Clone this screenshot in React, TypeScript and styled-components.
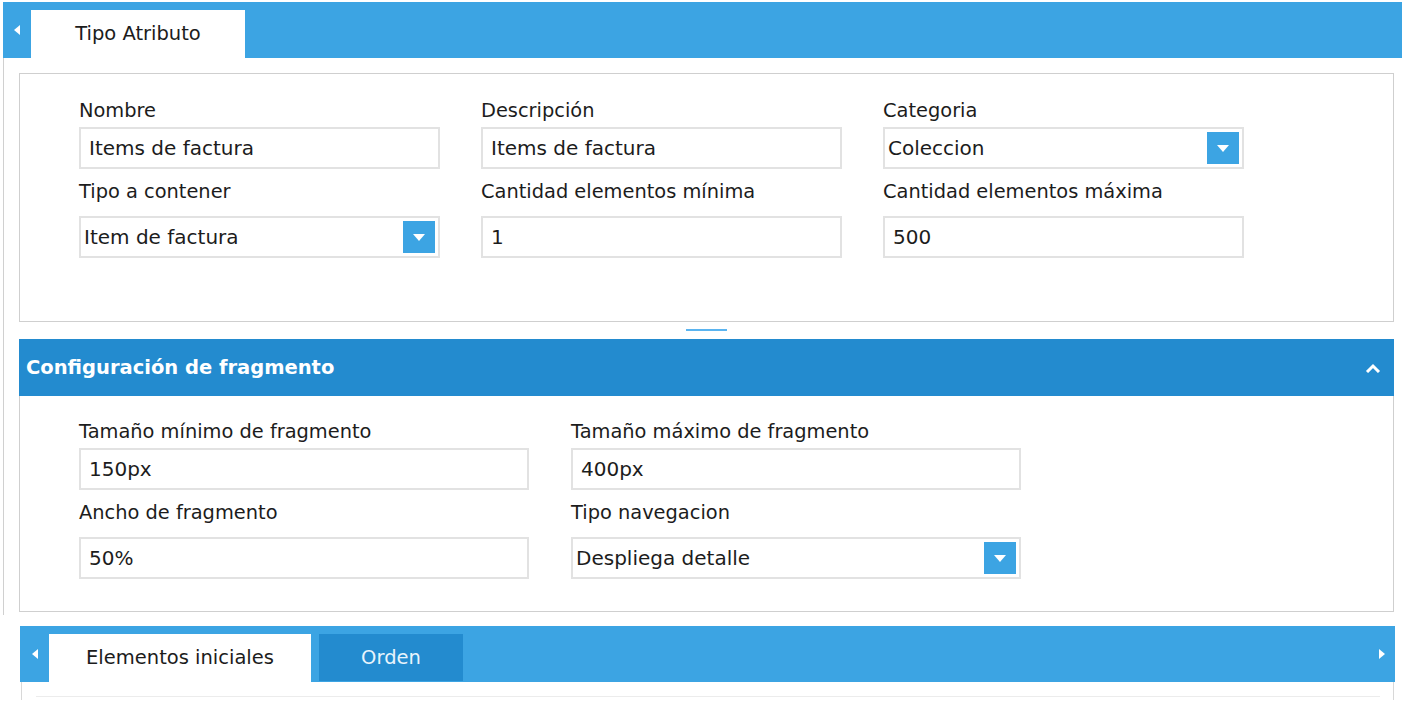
import React from 'react'
import styled, { createGlobalStyle } from 'styled-components'

const GlobalStyle = createGlobalStyle`
  html, body {
    margin: 0;
    padding: 0;
    background: #ffffff;
  }
  body {
    font-family: "DejaVu Sans", Verdana, sans-serif;
    font-size: 20px;
    color: #1c1c1c;
    overflow: hidden;
  }
`

const BLUE = '#3ca4e3'
const DARK_BLUE = '#238bcf'

const Page = styled.div`
  width: 1402px;
  height: 701px;
  padding-top: 2px;
  box-sizing: border-box;
`

const TabBar = styled.div<{ $inset?: boolean }>`
  display: flex;
  align-items: flex-end;
  height: 56px;
  background: ${BLUE};
  margin-left: ${p => (p.$inset ? '20px' : '3px')};
  margin-right: ${p => (p.$inset ? '7px' : '0')};
`

const ArrowCell = styled.div<{ $w: number }>`
  width: ${p => p.$w}px;
  height: 100%;
  display: flex;
  align-items: center;
  justify-content: center;
  flex-shrink: 0;
`

const Tab = styled.div<{ $active?: boolean; $w: number }>`
  width: ${p => p.$w}px;
  height: ${p => (p.$active ? 48 : 47)}px;
  margin-bottom: ${p => (p.$active ? 0 : 1)}px;
  margin-right: 8px;
  display: flex;
  align-items: center;
  justify-content: center;
  background: ${p => (p.$active ? '#ffffff' : DARK_BLUE)};
  color: ${p => (p.$active ? '#1c1c1c' : '#e8f4fc')};
  font-size: 19.5px;
  padding-bottom: 1px;
  box-sizing: border-box;
`

const Spacer = styled.div`
  flex: 1;
`

const Frame = styled.div`
  border-left: 1px solid #d0d0d0;
  margin-left: 3px;
  padding: 15px 8px 3px 15px;
`

const Panel = styled.div<{ $pt: number; $pb: number; $top?: boolean }>`
  border: 1px solid #cfcfcf;
  border-top: ${p => (p.$top ? '1px solid #cfcfcf' : 'none')};
  padding: ${p => p.$pt}px 0 ${p => p.$pb}px 59px;
`

const FieldGrid = styled.div<{ $col: number; $cols: number; $gap: number }>`
  display: grid;
  grid-template-columns: repeat(${p => p.$cols}, ${p => p.$col}px);
  column-gap: ${p => p.$gap}px;
  row-gap: 12px;
`

const Field = styled.div`
  display: flex;
  flex-direction: column;
`

const Label = styled.div<{ $lower?: boolean }>`
  height: 22px;
  line-height: 22px;
  font-size: 19.4px;
  margin-bottom: ${p => (p.$lower ? 13 : 5)}px;
  white-space: nowrap;
`

const InputBox = styled.div`
  position: relative;
  height: 42px;
  border: 2px solid #e2e2e2;
  box-sizing: border-box;
  display: flex;
  align-items: center;
  padding-left: 8px;
`

const SelectBox = styled(InputBox)`
  padding-left: 3px;
`

const DropButton = styled.div`
  position: absolute;
  right: 3px;
  top: 3px;
  width: 32px;
  height: 32px;
  background: ${BLUE};
  display: flex;
  align-items: center;
  justify-content: center;
`

const Divider = styled.div`
  display: flex;
  justify-content: center;
  padding: 7px 0 8px;
`

const Grip = styled.div`
  width: 41px;
  height: 2px;
  background: #5ab4f0;
`

const SectionHeader = styled.div`
  height: 57px;
  background: ${DARK_BLUE};
  color: #ffffff;
  font-weight: bold;
  font-size: 19.5px;
  display: flex;
  align-items: center;
  justify-content: space-between;
  padding: 0 13px 0 7px;
`

const BottomArea = styled.div`
  margin-top: 11px;
`

const TabContent = styled.div`
  margin-left: 21px;
  width: 1373px;
  height: 18px;
  border-left: 1px solid #d8d8d8;
  border-right: 1px solid #d8d8d8;
  box-sizing: border-box;
  padding: 14px 13px 0 14px;
`

const ContentLine = styled.div`
  height: 1px;
  background: #ececec;
`

const TriangleLeft = () => (
  <svg width="6" height="10" viewBox="0 0 6 10">
    <path d="M6 0 L0 5 L6 10 Z" fill="#fff" />
  </svg>
)

const TriangleRight = () => (
  <svg width="6" height="10" viewBox="0 0 6 10">
    <path d="M0 0 L6 5 L0 10 Z" fill="#fff" />
  </svg>
)

const TriangleDown = () => (
  <svg width="12" height="7" viewBox="0 0 12 7">
    <path d="M0 0 H12 L6 7 Z" fill="#fff" />
  </svg>
)

const ChevronUp = () => (
  <svg width="16" height="10" viewBox="0 0 16 10">
    <path d="M2 9 L8 3 L14 9" fill="none" stroke="#fff" strokeWidth="3" />
  </svg>
)

type FieldDef = { label: string; value: string; select?: boolean }

const Input = ({ label, value, select, lower }: FieldDef & { lower?: boolean }) => (
  <Field>
    <Label $lower={lower}>{label}</Label>
    {select ? (
      <SelectBox>
        {value}
        <DropButton>
          <TriangleDown />
        </DropButton>
      </SelectBox>
    ) : (
      <InputBox>{value}</InputBox>
    )}
  </Field>
)

const general: FieldDef[] = [
  { label: 'Nombre', value: 'Items de factura' },
  { label: 'Descripción', value: 'Items de factura' },
  { label: 'Categoria', value: 'Coleccion', select: true },
  { label: 'Tipo a contener', value: 'Item de factura', select: true },
  { label: 'Cantidad elementos mínima', value: '1' },
  { label: 'Cantidad elementos máxima', value: '500' },
]

const fragment: FieldDef[] = [
  { label: 'Tamaño mínimo de fragmento', value: '150px' },
  { label: 'Tamaño máximo de fragmento', value: '400px' },
  { label: 'Ancho de fragmento', value: '50%' },
  { label: 'Tipo navegacion', value: 'Despliega detalle', select: true },
]

export default function App() {
  return (
    <>
      <GlobalStyle />
      <Page>
        <TabBar>
          <ArrowCell $w={28}>
            <TriangleLeft />
          </ArrowCell>
          <Tab $active $w={214}>Tipo Atributo</Tab>
        </TabBar>

        <Frame>
          <Panel $top $pt={26} $pb={63}>
            <FieldGrid $cols={3} $col={361} $gap={41}>
              {general.map((f, i) => (
                <Input key={f.label} {...f} lower={i >= 3} />
              ))}
            </FieldGrid>
          </Panel>

          <Divider>
            <Grip />
          </Divider>

          <SectionHeader>
            <span>Configuración de fragmento</span>
            <ChevronUp />
          </SectionHeader>
          <Panel $pt={25} $pb={32}>
            <FieldGrid $cols={2} $col={450} $gap={42}>
              {fragment.map((f, i) => (
                <Input key={f.label} {...f} lower={i >= 2} />
              ))}
            </FieldGrid>
          </Panel>
        </Frame>

        <BottomArea>
          <TabBar $inset>
            <ArrowCell $w={29}>
              <TriangleLeft />
            </ArrowCell>
            <Tab $active $w={262}>Elementos iniciales</Tab>
            <Tab $w={144}>Orden</Tab>
            <Spacer />
            <ArrowCell $w={26}>
              <TriangleRight />
            </ArrowCell>
          </TabBar>
          <TabContent>
            <ContentLine />
          </TabContent>
        </BottomArea>
      </Page>
    </>
  )
}
